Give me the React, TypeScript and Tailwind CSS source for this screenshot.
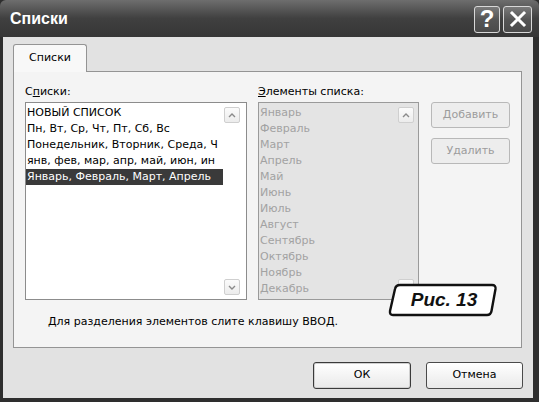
import React from "react";

const leftItems = [
  "НОВЫЙ СПИСОК",
  "Пн, Вт, Ср, Чт, Пт, Сб, Вс",
  "Понедельник, Вторник, Среда, Ч",
  "янв, фев, мар, апр, май, июн, ин",
  "Январь, Февраль, Март, Апрель",
];

const months = [
  "Январь",
  "Февраль",
  "Март",
  "Апрель",
  "Май",
  "Июнь",
  "Июль",
  "Август",
  "Сентябрь",
  "Октябрь",
  "Ноябрь",
  "Декабрь",
];

function Arrow(props: { down?: boolean }) {
  return (
    <div className="w-[16px] h-[16px] rounded-[2px] border border-[#cfcfcf] bg-linear-to-b from-[#fbfbfb] to-[#ececec] flex items-center justify-center">
      <svg width="8" height="5" viewBox="0 0 8 5">
        <path
          d={props.down ? "M1 1 L4 4 L7 1" : "M1 4 L4 1 L7 4"}
          fill="none"
          stroke="#8a8a8a"
          strokeWidth="1.4"
        />
      </svg>
    </div>
  );
}

function TitleButton(props: { children: React.ReactNode; w: string }) {
  return (
    <div
      className={`${props.w} h-[27px] rounded-[3px] border border-[#d8d8d8] bg-linear-to-b from-[#7a7a7a] via-[#555] to-[#4a4a4a] flex items-center justify-center`}
    >
      {props.children}
    </div>
  );
}

export default function App() {
  return (
    <div className="w-[539px] h-[402px] bg-[#2e2e2e] flex flex-col overflow-hidden font-['DejaVu_Sans',Verdana,sans-serif] text-black">
      {/* title bar */}
      <div className="h-[37px] shrink-0 flex items-center pl-[10px] pr-[7px] rounded-t-[6px] bg-linear-to-b from-[#6e6e6e] via-[#404040] to-[#363636]">
        <span className="text-white font-bold text-[16px] font-['Liberation_Sans',Arial,sans-serif]">Списки</span>
        <div className="ml-auto flex gap-[3px] mt-[1px]">
          <TitleButton w="w-[26px]">
            <span className="text-white font-bold text-[24px] leading-none font-['Liberation_Sans',Arial,sans-serif]">?</span>
          </TitleButton>
          <TitleButton w="w-[29px]">
            <svg width="18" height="18" viewBox="0 0 18 18">
              <path d="M3 3 L15 15 M15 3 L3 15" stroke="#fff" strokeWidth="3" strokeLinecap="square" />
            </svg>
          </TitleButton>
        </div>
      </div>

      {/* body */}
      <div className="flex-1 ml-[3px] mr-[6px] mb-[4px] bg-[#e2e2e2] pl-[10px] pr-[11px] pt-[7px] flex flex-col text-[11px]">
        <div className="flex">
          <div className="relative z-10 -mb-px w-[74px] h-[28px] border border-b-0 border-[#949494] rounded-t-[3px] bg-[#f8f8f8] flex items-center justify-center">
            Списки
          </div>
        </div>

        <div className="relative h-[277px] border border-[#949494] bg-[#f4f4f4] pt-[12px] pl-[11px]">
          <div className="flex">
            {/* left list */}
            <div className="w-[222px]">
              <div className="h-[16px] leading-[16px]">
                С<span className="underline">п</span>иски:
              </div>
              <div className="mt-[2px] h-[198px] border border-[#8c8c8c] bg-white flex">
                <div className="flex-1 min-w-0 pt-[2px] leading-[16px] overflow-hidden">
                  {leftItems.map((t, i) => (
                    <div
                      key={t}
                      className={`pl-[1px] whitespace-nowrap overflow-hidden ${
                        i === 4 ? "bg-[#3a3a3a] text-white" : ""
                      }`}
                    >
                      {t}
                    </div>
                  ))}
                </div>
                <div className="w-[23px] shrink-0 pl-[1px] py-[4px] flex flex-col justify-between">
                  <Arrow />
                  <Arrow down />
                </div>
              </div>
            </div>

            {/* right list */}
            <div className="w-[161px] ml-[11px]">
              <div className="h-[16px] leading-[16px]">
                <span className="underline">Э</span>лементы списка:
              </div>
              <div className="mt-[2px] h-[198px] border border-[#9a9a9a] bg-[#e4e4e4] flex">
                <div className="flex-1 min-w-0 pt-[2px] pl-[1px] leading-[16px] text-[#a2a2a2]">
                  {months.map((m) => (
                    <div key={m} className="whitespace-nowrap">
                      {m}
                    </div>
                  ))}
                </div>
                <div className="w-[20px] shrink-0 py-[4px] flex flex-col justify-between">
                  <Arrow />
                  <Arrow down />
                </div>
              </div>
            </div>

            {/* side buttons */}
            <div className="w-[79px] ml-[12px] pt-[18px] flex flex-col gap-[10px]">
              <div className="h-[26px] rounded-[3px] border border-[#b8b8b8] bg-[#ededed] flex items-center justify-center text-[#9c9c9c]">
                Добавить
              </div>
              <div className="h-[26px] rounded-[3px] border border-[#b8b8b8] bg-[#ededed] flex items-center justify-center text-[#9c9c9c]">
                Удалить
              </div>
            </div>
          </div>

          <div className="mt-[14px] ml-[23px] h-[16px] leading-[16px]">
            Для разделения элементов слите клавишу ВВОД.
          </div>

          {/* figure label */}
          <div className="absolute left-[374px] top-[211px] w-[110px] h-[34px]">
            <svg width="110" height="34" viewBox="0 0 110 34" className="absolute inset-0">
              <path
                d="M12 2 L104 2 Q108 2 107.5 6 L103.5 28 Q102.8 32 99 32 L5 32 Q1.5 32 2 28 L7 6 Q7.8 2 12 2 Z"
                fill="#fff"
                stroke="#111"
                strokeWidth="2.4"
                strokeLinejoin="round"
              />
            </svg>
            <div className="absolute inset-0 flex items-center justify-center font-bold italic text-[19px] text-[#111] pl-[2px] font-['Liberation_Sans',Arial,sans-serif]">
              Рис. 13
            </div>
          </div>
        </div>

        {/* bottom buttons */}
        <div className="mt-[14px] flex justify-end gap-[15px] -mr-px">
          <div className="w-[98px] h-[27px] rounded-[3px] border border-[#3a3a3a] bg-linear-to-b from-white to-[#e9e9e9] shadow-[inset_0_0_0_1px_#d0d0d0] flex items-center justify-center">
            ОК
          </div>
          <div className="w-[97px] h-[27px] rounded-[3px] border border-[#4a4a4a] bg-linear-to-b from-white to-[#e9e9e9] flex items-center justify-center">
            Отмена
          </div>
        </div>
      </div>
    </div>
  );
}
